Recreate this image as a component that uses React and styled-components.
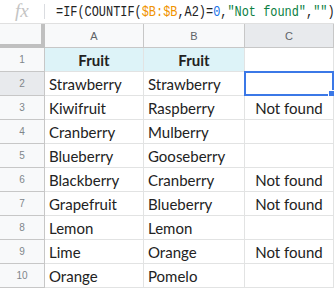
import React from 'react'
import styled, { createGlobalStyle, css } from 'styled-components'

const Global = createGlobalStyle`
  body { margin: 0; background: #fff; overflow: hidden; }
`

const Bar = styled.div`
  height: 24px;
  box-sizing: border-box;
  border-bottom: 1px solid #e0e0e0;
  display: flex;
  align-items: center;
  background: #fff;
  overflow: hidden;
`
const Fx = styled.div`
  flex-shrink: 0;
  width: 45px;
  box-sizing: border-box;
  padding-left: 15px;
  font-family: "Liberation Serif", serif;
  font-style: italic;
  font-size: 19px;
  color: #c4c4c4;
  border-right: 1px solid #dadce0;
  height: 15px;
  line-height: 14px;
`
const Formula = styled.div`
  flex-shrink: 0;
  margin-left: 11px;
  font-family: "Liberation Mono", monospace;
  font-size: 14px;
  color: #222;
  white-space: nowrap;
  transform: scaleX(0.85);
  transform-origin: left center;
`
const Tok = styled.span`
  color: ${p => p.c};
`

const Grid = styled.div`
  display: grid;
  grid-template-columns: 45px 99px 101px 89px;
  grid-auto-rows: 24px;
`
const Cell = styled.div`
  box-sizing: border-box;
  border-right: 1px solid #e2e3e3;
  border-bottom: 1px solid #e2e3e3;
  font-family: "Lato", "Open Sans", sans-serif;
  font-size: 15px;
  color: #222;
  line-height: 25px;
  padding: 0 4px;
  white-space: nowrap;
  overflow: hidden;
  position: relative;
  text-align: ${p => (p.center ? 'center' : 'left')};
  background: ${p => (p.head ? '#ddf3f8' : '#fff')};
  font-weight: ${p => (p.head ? 700 : 400)};
  ${p => p.sel && css`
    overflow: visible;
    border: 2px solid #3b78e7;
    margin: -1px 0 0 -1px;
  `}
`
const Handle = styled.span`
  position: absolute;
  right: -4px;
  bottom: -4px;
  width: 6px;
  height: 6px;
  background: #3b78e7;
  border: 1px solid #fff;
`
const Header = styled.div`
  box-sizing: border-box;
  border-right: 1px solid #c7c7c7;
  border-bottom: 1px solid #c7c7c7;
  background: ${p => (p.active ? '#e8eaed' : '#f8f9fa')};
  font-family: "Liberation Sans", Arial, sans-serif;
  font-size: 11px;
  color: #5f6368;
  display: flex;
  align-items: center;
  justify-content: center;
`
const Corner = styled.div`
  box-sizing: border-box;
  background: #f8f9fa;
  border-right: 4px solid #c0c0c0;
  border-bottom: 4px solid #c0c0c0;
`
const RowNum = styled(Header)`
  font-size: 10px;
  color: #80868b;
`

const rows = [
  ['Strawberry', 'Strawberry', ''],
  ['Kiwifruit', 'Raspberry', 'Not found'],
  ['Cranberry', 'Mulberry', ''],
  ['Blueberry', 'Gooseberry', ''],
  ['Blackberry', 'Cranberry', 'Not found'],
  ['Grapefruit', 'Blueberry', 'Not found'],
  ['Lemon', 'Lemon', ''],
  ['Lime', 'Orange', 'Not found'],
  ['Orange', 'Pomelo', ''],
]

export default function App() {
  return (
    <>
      <Global />
      <Bar>
        <Fx>fx</Fx>
        <Formula>
          =IF(COUNTIF(<Tok c="#f09300">$B:$B</Tok>,A2)=<Tok c="#1a73e8">0</Tok>,
          <Tok c="#0b8043">"Not found"</Tok>,<Tok c="#0b8043">""</Tok>)
        </Formula>
      </Bar>
      <Grid>
        <Corner />
        <Header>A</Header>
        <Header>B</Header>
        <Header active>C</Header>

        <RowNum>1</RowNum>
        <Cell head center>Fruit</Cell>
        <Cell head center>Fruit</Cell>
        <Cell />

        {rows.map((r, i) => (
          <React.Fragment key={i}>
            <RowNum active={i === 0}>{i + 2}</RowNum>
            <Cell>{r[0]}</Cell>
            <Cell>{r[1]}</Cell>
            <Cell center sel={i === 0}>
              {r[2]}
              {i === 0 && <Handle />}
            </Cell>
          </React.Fragment>
        ))}
      </Grid>
    </>
  )
}
